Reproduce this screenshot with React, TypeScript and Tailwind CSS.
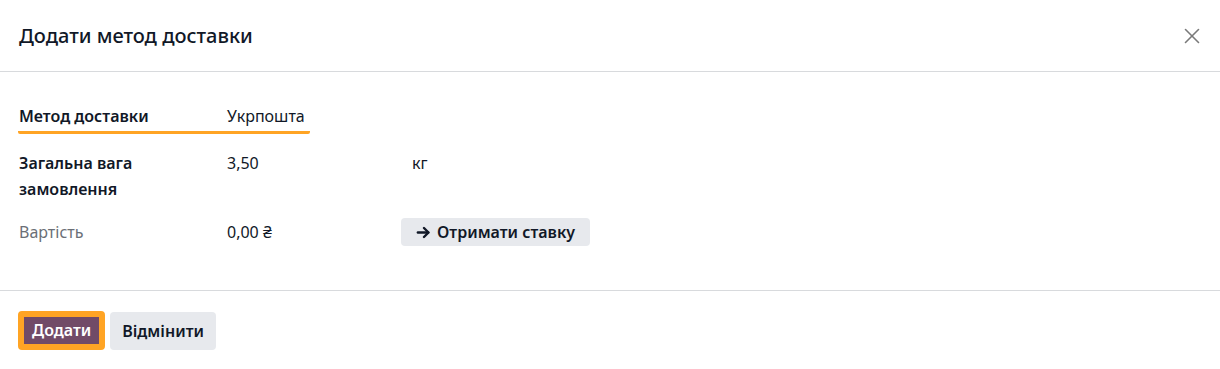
import { X } from 'lucide-react';

function ArrowIcon() {
  return (
    <svg viewBox="0 0 16 16" className="h-[15px] w-[15px]" fill="none" stroke="currentColor" strokeWidth={2.6} strokeLinecap="round" strokeLinejoin="round">
      <path d="M2 8h11" />
      <path d="M8.5 3.2 13.3 8l-4.8 4.8" />
    </svg>
  );
}

export default function App() {
  return (
    <div className="w-[1220px] h-[369px] bg-white text-[#111827] font-['Noto_Sans',sans-serif]">
      <header className="flex h-[72px] items-center justify-between border-b border-[#d8dadd] pl-[19px] pr-[15px]">
        <h4 className="text-[20px] font-medium leading-none">Додати метод доставки</h4>
        <button type="button" className="flex h-[26px] w-[26px] items-center justify-center text-[#7a7a7a]" aria-label="Close">
          <X className="h-[26px] w-[26px]" strokeWidth={1.5} />
        </button>
      </header>

      <main className="h-[219px] border-b border-[#d8dadd] px-[19px] pt-[31px] text-[16px]">
        <div className="-ml-[1px] flex w-[292px] items-start rounded-[2px] border-b-[3px] border-[#ffa424] pb-[2px] pl-[1px]">
          <div className="w-[208px] font-semibold leading-[26px]">Метод доставки</div>
          <div className="leading-[26px]">Укрпошта</div>
        </div>

        <div className="mt-[16px] flex items-start">
          <div className="w-[208px] font-semibold leading-[26px]">
            Загальна вага
            <br />
            замовлення
          </div>
          <div className="w-[185px] leading-[26px]">3,50</div>
          <div className="leading-[26px]">кг</div>
        </div>

        <div className="mt-[16px] flex items-center">
          <div className="w-[208px] leading-[26px] text-[#6b6f76]">Вартість</div>
          <div className="w-[174px] leading-[26px]">0,00 ₴</div>
          <button
            type="button"
            className="flex h-[28px] items-center gap-[6px] rounded-[4px] bg-[#e7e9ed] px-[15px] font-semibold text-[#111827]"
          >
            <ArrowIcon />
            Отримати ставку
          </button>
        </div>
      </main>

      <footer className="flex items-center gap-[5px] px-[18px] pt-[20px] text-[16px]">
        <button type="button" className="rounded-[4px] border-[6px] border-[#ffa424] bg-[#714b67] px-[8px] font-semibold leading-[27px] text-white">
          Додати
        </button>
        <button type="button" className="h-[38px] rounded-[4px] bg-[#e7e9ed] px-[12px] font-semibold text-[#111827]">
          Відмінити
        </button>
      </footer>
    </div>
  );
}
